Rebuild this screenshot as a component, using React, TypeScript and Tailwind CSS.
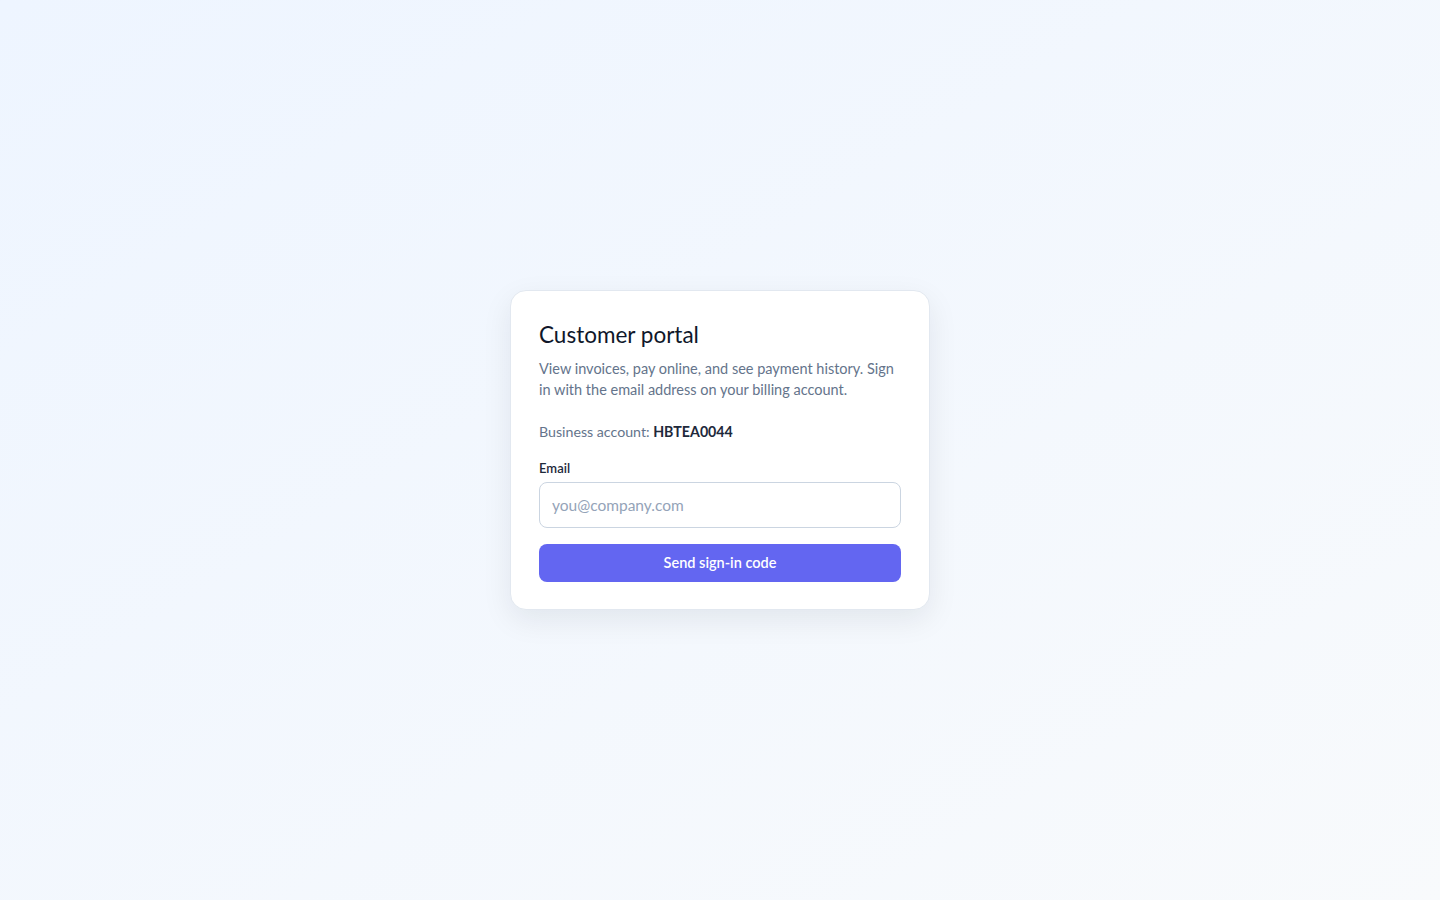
import React from "react";

export default function App() {
  return (
    <div
      className="min-h-screen w-full flex items-center justify-center bg-gradient-to-br from-[#eef5ff] to-[#f8fafc]"
      style={{ fontFamily: '"Segoe UI", Lato, sans-serif' }}
    >
      <div className="w-[420px] bg-white border border-[#e2e8f0] rounded-2xl px-[28px] pt-[29px] pb-[27px] shadow-[0_10px_30px_rgba(15,23,42,0.08)]">
        <h1 className="text-[22.5px] leading-[29px] font-normal text-[#0f172a]">Customer portal</h1>
        <p className="mt-[9px] text-[14.5px] leading-[21px] text-[#64748b]">
          View invoices, pay online, and see payment history. Sign in with the email address on your billing account.
        </p>
        <p className="mt-[21px] text-[14.2px] leading-[21px] text-[#64748b]">
          Business account: <span className="font-bold text-[#1e293b]">HBTEA0044</span>
        </p>
        <label className="block mt-[17px] text-[13px] leading-[18px] font-semibold text-[#1e293b]">Email</label>
        <input
          type="email"
          placeholder="you@company.com"
          className="mt-[5px] block w-full h-[46px] px-[12px] rounded-lg border border-[#cbd5e1] text-[15.5px] text-[#0f172a] placeholder:text-[#94a3b8] outline-none"
        />
        <button className="mt-[16px] w-full h-[38px] rounded-lg bg-[#6366f1] text-white text-[14.5px] font-semibold">
          Send sign-in code
        </button>
      </div>
    </div>
  );
}
